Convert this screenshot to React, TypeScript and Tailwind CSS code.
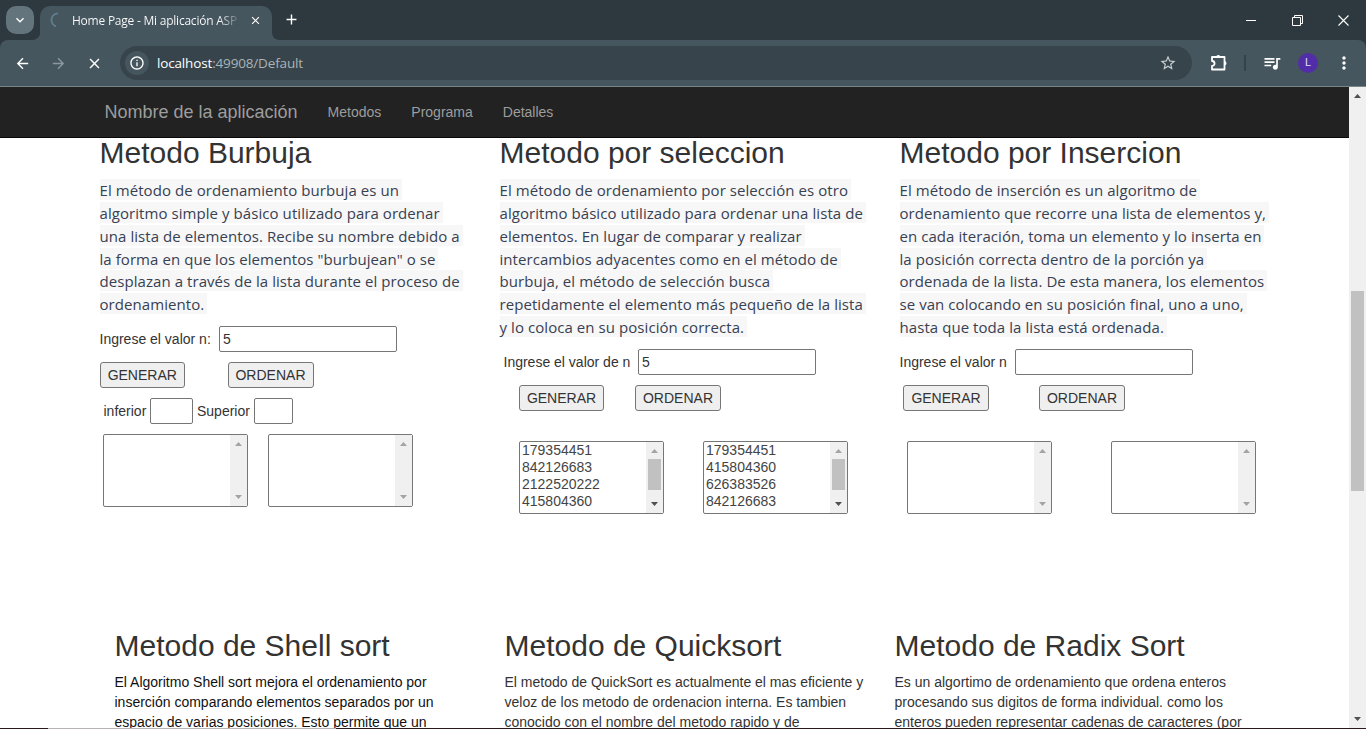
import React from "react";
import {
  MdAdd,
  MdArrowBack,
  MdArrowForward,
  MdClose,
  MdInfoOutline,
  MdKeyboardArrowDown,
  MdMoreVert,
  MdQueueMusic,
  MdStarBorder,
} from "react-icons/md";

function Arrow({ dir, active }: { dir: "up" | "down"; active?: boolean }) {
  return (
    <svg width="7" height="4" viewBox="0 0 7 4" className={active ? "fill-[#505050]" : "fill-[#a3a3a3]"}>
      <path d={dir === "up" ? "M3.5 0L7 4H0z" : "M0 0h7L3.500 4z"} />
    </svg>
  );
}

function TabStrip() {
  return (
    <div className="flex h-10 bg-[#2d383f] text-white">
      <div className="flex w-10 shrink-0 flex-col">
        <div className="ml-[6px] mt-[6px] flex h-7 w-7 items-center justify-center rounded-[10px] bg-[#63747c]">
          <MdKeyboardArrowDown size={16} />
        </div>
        <svg width="10" height="6" viewBox="0 0 10 6" className="ml-auto fill-[#46565f]">
          <path d="M10 0v6H0C6 6 9 4 10 0z" />
        </svg>
      </div>
      <div className="mt-[6px] flex h-[34px] w-[232px] shrink-0 items-center rounded-t-[10px] bg-[#46565f] pb-[6px]">
        <svg width="16" height="16" viewBox="0 0 16 16" className="ml-2 shrink-0">
          <path d="M10 1.500A6.500 6.500 0 0 0 8 14.200" fill="none" stroke="#5f7c8c" strokeWidth="2" />
        </svg>
        <div className="ml-2 mt-px w-[167px] whitespace-nowrap bg-gradient-to-r from-white from-88% to-[#5b6a72] bg-clip-text font-['Open_Sans',sans-serif] text-[12px] font-medium leading-[18px] tracking-[-0.23px] text-transparent">
          Home Page - Mi aplicación ASP
        </div>
        <MdClose size={13} className="ml-[10px] mt-px" />
      </div>
      <svg width="8" height="8" viewBox="0 0 8 8" className="mt-8 fill-[#46565f]">
        <path d="M0 0v8h8C3 8 0 5 0 0z" />
      </svg>
      <MdAdd size={17} className="ml-[3px] mt-[11px]" />
      <div className="ml-auto flex">
        <div className="flex w-[46px] items-center justify-center">
          <div className="h-px w-[10px] bg-white" />
        </div>
        <div className="flex w-[46px] items-center justify-center">
          <svg width="11" height="11" viewBox="0 0 11 11" fill="none" stroke="white">
            <path d="M.5 2.5h8v8h-8zM2.5 2.5v-2h8v8h-2" />
          </svg>
        </div>
        <div className="flex w-[46px] items-center justify-center">
          <svg width="11" height="11" viewBox="0 0 11 11" fill="none" stroke="white" strokeWidth="1.1">
            <path d="M.5.5l10 10M10.5.5l-10 10" />
          </svg>
        </div>
      </div>
    </div>
  );
}

function Toolbar() {
  return (
    <div className="bg-[#2d383f]">
      <div className="flex h-[47px] items-center rounded-t-[8px] border-b border-[#7b8589] bg-[#46565f] text-white">
        <MdArrowBack size={17} className="ml-[13.500px]" />
        <MdArrowForward size={17} className="ml-[19px] text-[#8b989e]" />
        <MdClose size={17} className="ml-[19px]" />
        <div className="ml-[17.500px] flex h-[34px] w-[1072px] items-center rounded-full bg-[#37444b]">
          <div className="ml-[5px] flex h-6 w-6 items-center justify-center rounded-full bg-[#46565f]">
            <MdInfoOutline size={16} />
          </div>
          <span className="ml-2 font-['Open_Sans',sans-serif] text-[13.5px] tracking-[-0.16px] text-[#aab3b7]">
            <span className="text-white">localhost</span>:49908/Default
          </span>
          <MdStarBorder size={18} className="ml-auto mr-[15px] text-[#c5cdd1]" />
        </div>
        <svg width="18" height="18" viewBox="0 0 18 18" className="ml-[18px]" fill="none" stroke="white" strokeWidth="1.8">
          <path d="M2 3h12.500v12.500H2v-3.500c3.400 0 3.400-5 0-5z" strokeLinejoin="round" />
          <path d="M6.300 2.800a2 1.800 0 0 1 4 0zM14.700 7.300a1.800 2 0 0 1 0 4z" fill="white" stroke="none" />
        </svg>
        <div className="ml-[16px] h-4 w-[2px] bg-[#33424b]" />
        <MdQueueMusic size={20} className="ml-[16px]" />
        <div className="ml-[16px] flex h-5 w-5 items-center justify-center rounded-full bg-[#512da8] font-['Roboto',sans-serif] text-[11px] text-[#e4dcf5]">
          L
        </div>
        <MdMoreVert size={20} className="ml-[16px]" />
      </div>
    </div>
  );
}

function ListBox({ items = [], className = "" }: { items?: string[]; className?: string }) {
  const full = items.length > 0;
  return (
    <div className={`flex h-[73px] w-[145px] shrink-0 rounded-[2px] border border-[#767676] bg-white ${className}`}>
      <div className="flex-1 pl-[2px] text-[14px] leading-[17px] text-[#444]">
        {items.map((v) => (
          <div key={v}>{v}</div>
        ))}
      </div>
      <div className="flex w-[17px] flex-col items-center bg-[#f0f0f0] py-[7px]">
        <Arrow dir="up" />
        {full && <div className="mt-[6px] h-[31px] w-[13px] bg-[#c1c1c1]" />}
        <div className="mt-auto flex">
          <Arrow dir="down" active={full} />
        </div>
      </div>
    </div>
  );
}

function Field({ value = "", className }: { value?: string; className: string }) {
  return (
    <div className={`h-[26px] shrink-0 rounded-[2px] border border-[#767676] bg-white pl-[3px] leading-[24px] ${className}`}>
      {value}
    </div>
  );
}

function Button({ children, className }: { children: string; className: string }) {
  return (
    <button
      className={`h-[26px] shrink-0 rounded-[3px] border border-[#767676] bg-[#efefef] text-center leading-[24px] ${className}`}
    >
      {children}
    </button>
  );
}

function Intro({ title, lines }: { title: string; lines: string[] }) {
  return (
    <>
      <h2 className="mb-[10px] whitespace-nowrap text-[30px] leading-[33px]">{title}</h2>
      <div className="mb-[10px] font-['Open_Sans',sans-serif] text-[15px] tracking-[0.065px] text-[#374151]">
        {lines.map((l) => (
          <div key={l} className="flex h-[22.857px]">
            <span className="h-[21px] whitespace-nowrap bg-[#f7f7f8] pr-1 leading-[22px] last:pr-[3px]">{l}</span>
          </div>
        ))}
      </div>
    </>
  );
}

function Method({ title, lines, className = "" }: { title: string; lines: string[]; className?: string }) {
  return (
    <div className="w-[390px] shrink-0">
      <h2 className="mb-[10px] whitespace-nowrap text-[30px] leading-[33px]">{title}</h2>
      <p className={`whitespace-nowrap leading-[20px] ${className}`}>
        {lines.map((l) => (
          <span key={l} className="block">
            {l}
          </span>
        ))}
      </p>
    </div>
  );
}

export default function App() {
  return (
    <div className="flex h-[729px] w-[1366px] flex-col overflow-hidden bg-white font-['Liberation_Sans',sans-serif] text-[14px] text-[#333]">
      <TabStrip />
      <Toolbar />
      <div className="flex h-[641px] shrink-0">
        <div className="flex w-[1349px] flex-col overflow-hidden">
          <nav className="z-10 flex h-[51px] shrink-0 items-center border-b border-[#080808] bg-[#222] pl-[104.500px] text-[#9d9d9d]">
            <span className="text-[18px]">Nombre de la aplicación</span>
            <span className="ml-[30px]">Metodos</span>
            <span className="ml-[30px]">Programa</span>
            <span className="ml-[30px]">Detalles</span>
          </nav>
          <div className="-mt-[2px] flex h-[493px] shrink-0 pl-[99.500px]">
            <section className="w-[400px] shrink-0">
              <Intro
                title="Metodo Burbuja"
                lines={[
                  "El método de ordenamiento burbuja es un",
                  "algoritmo simple y básico utilizado para ordenar",
                  "una lista de elementos. Recibe su nombre debido a",
                  'la forma en que los elementos "burbujean" o se',
                  "desplazan a través de la lista durante el proceso de",
                  "ordenamiento.",
                ]}
              />
              <div className="flex items-center">
                <span className="w-[119.500px]">Ingrese el valor n:</span>
                <Field value="5" className="w-[178px]" />
              </div>
              <div className="mt-[10px] flex">
                <Button className="w-[85.500px]">GENERAR</Button>
                <Button className="ml-[42.500px] w-[86px]">ORDENAR</Button>
              </div>
              <div className="mt-[10px] flex items-center pl-1">
                <span className="w-[46.500px]">inferior</span>
                <Field className="w-[43px]" />
                <span className="ml-1 w-[57px]">Superior</span>
                <Field className="w-[39px]" />
              </div>
              <div className="mt-[10px] flex pl-[3.500px]">
                <ListBox />
                <ListBox className="ml-5" />
              </div>
            </section>
            <section className="w-[400px] shrink-0">
              <Intro
                title="Metodo por seleccion"
                lines={[
                  "El método de ordenamiento por selección es otro",
                  "algoritmo básico utilizado para ordenar una lista de",
                  "elementos. En lugar de comparar y realizar",
                  "intercambios adyacentes como en el método de",
                  "burbuja, el método de selección busca",
                  "repetidamente el elemento más pequeño de la lista",
                  "y lo coloca en su posición correcta.",
                ]}
              />
              <div className="flex items-center pl-1">
                <span className="w-[134.500px] pt-px">Ingrese el valor de n</span>
                <Field value="5" className="w-[178px]" />
              </div>
              <div className="mt-[10px] flex pl-[19.500px]">
                <Button className="w-[85px]">GENERAR</Button>
                <Button className="ml-[31px] w-[86px]">ORDENAR</Button>
              </div>
              <div className="mt-[30px] flex pl-[19.500px]">
                <ListBox items={["179354451", "842126683", "2122520222", "415804360"]} />
                <ListBox className="ml-[39px]" items={["179354451", "415804360", "626383526", "842126683"]} />
              </div>
            </section>
            <section className="w-[400px] shrink-0">
              <Intro
                title="Metodo por Insercion"
                lines={[
                  "El método de inserción es un algoritmo de",
                  "ordenamiento que recorre una lista de elementos y,",
                  "en cada iteración, toma un elemento y lo inserta en",
                  "la posición correcta dentro de la porción ya",
                  "ordenada de la lista. De esta manera, los elementos",
                  "se van colocando en su posición final, uno a uno,",
                  "hasta que toda la lista está ordenada.",
                ]}
              />
              <div className="flex items-center">
                <span className="w-[115.500px] pt-px">Ingrese el valor n</span>
                <Field className="w-[178px]" />
              </div>
              <div className="mt-[10px] flex pl-[3.500px]">
                <Button className="w-[86px]">GENERAR</Button>
                <Button className="ml-[50px] w-[86px]">ORDENAR</Button>
              </div>
              <div className="mt-[30px] flex pl-[7.500px]">
                <ListBox />
                <ListBox className="ml-[59px]" />
              </div>
            </section>
          </div>
          <div className="flex shrink-0 pl-[114.500px]">
            <Method
              title="Metodo de Shell sort"
              className="text-[#111]"
              lines={[
                "El Algoritmo Shell sort mejora el ordenamiento por",
                "inserción comparando elementos separados por un",
                "espacio de varias posiciones. Esto permite que un",
              ]}
            />
            <Method
              title="Metodo de Quicksort"
              lines={[
                "El metodo de QuickSort es actualmente el mas eficiente y",
                "veloz de los metodo de ordenacion interna. Es tambien",
                "conocido con el nombre del metodo rapido y de",
              ]}
            />
            <Method
              title="Metodo de Radix Sort"
              lines={[
                "Es un algortimo de ordenamiento que ordena enteros",
                "procesando sus digitos de forma individual. como los",
                "enteros pueden representar cadenas de caracteres (por",
              ]}
            />
          </div>
        </div>
        <div className="flex w-[17px] flex-col items-center bg-[#f0f0f0] pb-[7px] pt-[7px]">
          <Arrow dir="up" active />
          <div className="mt-[193px] h-[200px] w-[13px] bg-[#c1c1c1]" />
          <div className="mt-auto flex">
            <Arrow dir="down" active />
          </div>
        </div>
      </div>
      <div className="flex h-px shrink-0 bg-[#2b1a1c]">
        <div className="ml-12 w-[288px] bg-[#b9b4b4]" />
      </div>
    </div>
  );
}
